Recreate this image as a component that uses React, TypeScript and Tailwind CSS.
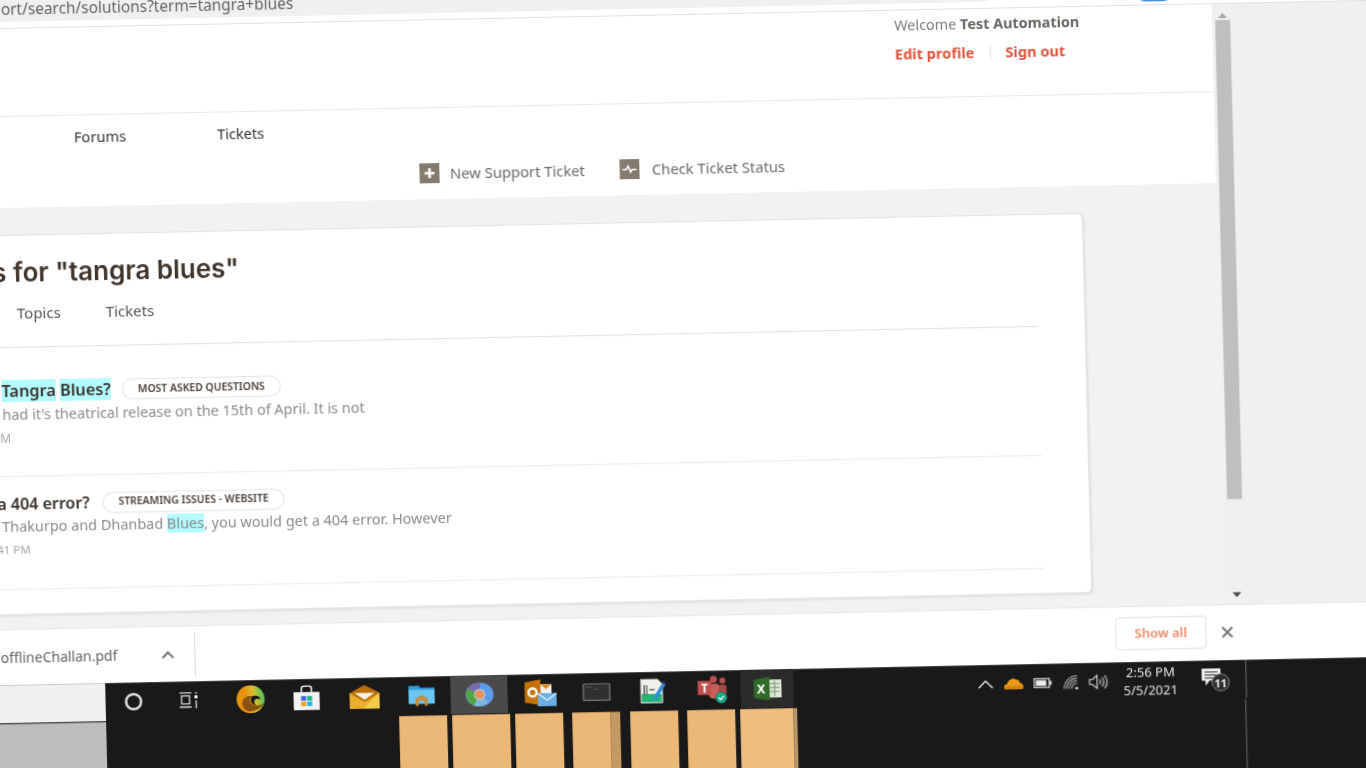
import type { ReactNode } from "react";

const sans = "font-['Noto_Sans',sans-serif]";

const Highlight = ({ children }: { children: ReactNode }) => (
  <mark className="bg-[#b3fbff] text-inherit">{children}</mark>
);

const Badge = ({ label, width }: { label: string; width: string }) => (
  <span className={`flex h-[21px] items-center justify-center rounded-full border-[1.5px] border-[#e7e5e1] text-[10.4px] font-semibold whitespace-nowrap text-[#4a433b] ${width}`}>
    {label}
  </span>
);

const CortanaIcon = () => (
  <svg width="20" height="20" viewBox="0 0 20 20">
    <circle cx="10" cy="10" r="7.5" fill="none" stroke="#e4e4e4" strokeWidth="2.4" />
  </svg>
);

const TaskViewIcon = () => (
  <svg width="22" height="20" viewBox="0 0 22 20" fill="none" stroke="#d8d8d8" strokeWidth="1.3">
    <path d="M1 2.5h12M1 16.5h12M3 5.5h8v8H3z" />
    <path d="M17.5 1.5v2M17.5 10v8" />
    <rect x="16" y="5" width="3" height="3" fill="#fff" stroke="none" />
  </svg>
);

const EdgeIcon = () => (
  <svg width="30" height="28" viewBox="0 0 30 28">
    <defs>
      <linearGradient id="edge" x1="0" y1="0.6" x2="1" y2="0.4">
        <stop offset="0.35" stopColor="#e8930f" />
        <stop offset="0.65" stopColor="#d9bd2c" />
        <stop offset="0.95" stopColor="#58c858" />
      </linearGradient>
    </defs>
    <circle cx="15" cy="14" r="14" fill="url(#edge)" />
    <path d="M9 24C3 17 9 9 17 11c-4 2-4 7 1 9 4 1 8 0 11-3-3 7-14 12-20 7z" fill="#8a5212" />
    <path d="M17 11c4-1 7 0 8 3-2-.5-5-.5-6 1-1 2 0 4 1 5-4 0-7-6-3-9z" fill="#191919" />
  </svg>
);

const StoreIcon = () => (
  <svg width="28" height="26" viewBox="0 0 28 26">
    <path d="M9 7V3.5C9 2 10 1 11.5 1h5C18 1 19 2 19 3.5V7" fill="none" stroke="#e8e8e8" strokeWidth="1.6" />
    <rect x="1" y="7" width="26" height="18" fill="#f2f2f2" />
    <rect x="8.5" y="11" width="5" height="4.5" fill="#3a62e0" />
    <rect x="14.5" y="11" width="5" height="4.5" fill="#10b582" />
    <rect x="8.5" y="16.5" width="5" height="4.5" fill="#f0a010" />
    <rect x="14.5" y="16.5" width="5" height="4.5" fill="#18b4f0" />
  </svg>
);

const MailIcon = () => (
  <svg width="30" height="24" viewBox="0 0 30 24">
    <path d="M0 8 15 0l15 8v16H0z" fill="#b86f08" />
    <path d="M5 8h20l-10 7z" fill="#f6f2ea" />
    <path d="M0 8l15 9 15-9v16H0z" fill="#e8b02c" />
    <path d="M30 8v16H13z" fill="#f4cc4a" />
  </svg>
);

const FolderIcon = () => (
  <svg width="28" height="22" viewBox="0 0 28 22">
    <path d="M1 1h10l2 2h14v16H1z" fill="#2f9bd8" />
    <rect x="1" y="5" width="26" height="14" fill="#6cc6f0" />
    <path d="M8 21v-8h3v-2h6v2h3v8h-3v-5h-6v5z" fill="#c98a3a" />
  </svg>
);

const ChromeIcon = () => (
  <svg width="28" height="24" viewBox="0 0 28 24">
    <ellipse cx="14" cy="12" rx="14" ry="12" fill="#5d9ce8" />
    <path d="M14 12 2 6C-1 12 1 19 8 23z" fill="#4fa53f" />
    <path d="M14 12 8 23c5 2 11 1 15-4z" fill="#7cb6d8" />
    <path d="M14 12 2 6C5 1 10 0 15 0z" fill="#7a6aa8" />
    <circle cx="14" cy="12" r="5.6" fill="#b8d4ee" />
    <circle cx="14" cy="12" r="4.6" fill="#e8925a" />
  </svg>
);

const OutlookIcon = () => (
  <svg width="32" height="28" viewBox="0 0 32 28">
    <path d="M0 3 16 0v26L0 23z" fill="#c57306" />
    <circle cx="8" cy="13" r="4" fill="none" stroke="#fff" strokeWidth="2.4" />
    <rect x="16" y="5" width="11" height="10" fill="#f2f2f2" />
    <path d="M16 5h11l-5.500 5z" fill="#d98a1e" />
    <rect x="13" y="14" width="19" height="13" fill="#6aaee6" />
    <path d="M13 14l9.500 7L32 14" fill="none" stroke="#e8f3fc" strokeWidth="1.300" />
  </svg>
);

const CmdIcon = () => (
  <svg width="28" height="18" viewBox="0 0 28 18">
    <rect x="0.700" y="0.700" width="26.600" height="16.600" rx="1" fill="#303030" stroke="#757575" strokeWidth="1.400" />
    <path d="M4 4h5M11 6h4" stroke="#5a5a5a" strokeWidth="1" />
  </svg>
);

const SnipIcon = () => (
  <svg width="27" height="26" viewBox="0 0 27 26">
    <path d="M1 1h17l5 5v19H1z" fill="#f1f1ec" stroke="#9a9a90" strokeWidth="0.800" />
    <path d="M2 16h20v8H2z" fill="#22b573" />
    <path d="M4 7h1.500v10H4zM7 7h1v10H7zM10 11h5v1.200h-5z" fill="#4a4a4a" />
    <path d="M14 19 23 5l3 2-9 14-3.500 1.500z" fill="#2f8fd8" />
    <path d="M23 5l1.200-2 2.800 2-1 2z" fill="#30307a" />
  </svg>
);

const TeamsIcon = () => (
  <svg width="30" height="28" viewBox="0 0 30 28">
    <circle cx="16" cy="3.500" r="3.500" fill="#b8524e" />
    <circle cx="25" cy="5" r="3" fill="#b8524e" />
    <rect x="11" y="8" width="12" height="15" rx="5" fill="#c8605a" />
    <rect x="21" y="9" width="8" height="11" rx="3" fill="#a84844" />
    <rect x="0" y="5" width="14" height="14" fill="#c0504c" />
    <text x="7" y="16.500" textAnchor="middle" fontSize="12" fontWeight="700" fill="#fff" fontFamily="Noto Sans, sans-serif">T</text>
    <circle cx="23.500" cy="22" r="5.800" fill="#19a987" stroke="#3a3a3a" strokeWidth="0.500" />
    <path d="M20.800 22l2 2 3.400-3.600" fill="none" stroke="#fff" strokeWidth="1.300" />
  </svg>
);

const ExcelIcon = () => (
  <svg width="28" height="24" viewBox="0 0 28 24">
    <rect x="14" y="3" width="14" height="18" fill="#dfe8d8" />
    <path d="M16 7h10M16 11h10M16 15h10M21 4v16" stroke="#5a8a50" strokeWidth="0.800" />
    <path d="M0 3 16 0v24L0 21z" fill="#2f6a2a" />
    <text x="7.500" y="16.500" textAnchor="middle" fontSize="12.500" fontWeight="700" fill="#fff" fontFamily="Noto Sans, sans-serif">X</text>
  </svg>
);

const OneDriveIcon = () => (
  <svg width="20" height="12" viewBox="0 0 20 12">
    <path d="M1 11.500C-.5 9 1 6.500 3.500 6.500 4.500 2.500 9-.5 12.500 2c2 0 3.500 1.500 4 3.500 2.500 0 4 3 2.500 6z" fill="#ec9c1a" />
    <path d="M1 11.500C0 9.500 2 8 5 8l4 .5 6-.5c2.500 0 5 1 4 3.500z" fill="#d98408" />
  </svg>
);

const BatteryIcon = () => (
  <svg width="18" height="10" viewBox="0 0 18 10">
    <rect x="0.600" y="0.600" width="15" height="8.800" fill="none" stroke="#e4e4e4" strokeWidth="1.200" />
    <rect x="2.200" y="2.200" width="10.500" height="5.600" fill="#eee" />
    <rect x="16.200" y="3" width="1.800" height="4" fill="#e4e4e4" />
  </svg>
);

const WifiIcon = () => (
  <svg width="16" height="14" viewBox="0 0 16 14" fill="none" stroke="#c8c8c8" strokeWidth="1">
    <path d="M.5 13.500A13 13 0 0 1 13.500.5M3 13.500A10.500 10.500 0 0 1 13.500 3M5.500 13.500A8 8 0 0 1 13.500 5.500M8 13.500A5.500 5.500 0 0 1 13.500 8" />
    <circle cx="13" cy="13" r="1.400" fill="#eee" stroke="none" />
  </svg>
);

const SpeakerIcon = () => (
  <svg width="20" height="16" viewBox="0 0 20 16" fill="none" stroke="#dedede" strokeWidth="1.100">
    <path d="M1 5.500h3L8.500 1.500v13L4 10.500H1z" />
    <path d="M11 5.500a3.500 3.500 0 0 1 0 5M13.500 3.500a6.500 6.500 0 0 1 0 9M16 1.500a9.500 9.500 0 0 1 0 13" />
  </svg>
);

const NotificationIcon = () => (
  <div className="relative h-[22px] w-[28px]">
    <svg width="20" height="18" viewBox="0 0 20 18">
      <path d="M0 0h19v12H8l-4 5v-5H0z" fill="#f4f4f4" />
      <path d="M3 3.500h13M3 6.500h13M3 9.500h9" stroke="#222" strokeWidth="1" />
    </svg>
    <span className="absolute top-[5px] left-[10px] flex h-[18px] w-[18px] items-center justify-center rounded-full border border-[#888] bg-[#2c2c2c] text-[11px] leading-none font-bold text-[#eee]">
      11
    </span>
  </div>
);

const PlusBox = () => (
  <svg width="20" height="20" viewBox="0 0 20 20">
    <rect width="20" height="20" fill="#857a6e" />
    <path d="M10 5v10M5 10h10" stroke="#fff" strokeWidth="2.600" />
  </svg>
);

const PulseBox = () => (
  <svg width="20" height="20" viewBox="0 0 20 20">
    <rect width="20" height="20" fill="#857a6e" />
    <path d="M3 10.500h3.500l2-3.500 2.500 6 1.500-2.500H17" fill="none" stroke="#fff" strokeWidth="1.500" />
  </svg>
);

const Taskbar = () => (
  <div className="flex flex-col bg-[#191919]">
    <div className="flex h-[38px] items-stretch">
      <div className="w-[188px] bg-[#f0f0f0]" />
      <div className="flex flex-1 items-center">
        <div className="flex h-full w-[55px] items-center justify-center"><CortanaIcon /></div>
        <div className="flex h-full w-[58px] items-center justify-center"><TaskViewIcon /></div>
        <div className="flex h-full w-[63px] items-center justify-center"><EdgeIcon /></div>
        <div className="flex h-full w-[50px] items-center justify-center"><StoreIcon /></div>
        <div className="flex h-full w-[66px] items-center justify-center"><MailIcon /></div>
        <div className="flex h-full w-[48px] items-center justify-center"><FolderIcon /></div>
        <div className="ml-[5px] flex h-full w-[57px] items-center justify-center bg-[#4a4a4a]"><ChromeIcon /></div>
        <div className="flex h-full w-[65px] items-center justify-center"><OutlookIcon /></div>
        <div className="flex h-full w-[48px] items-center justify-center"><CmdIcon /></div>
        <div className="flex h-full w-[64px] items-center justify-center"><SnipIcon /></div>
        <div className="flex h-full w-[56px] items-center justify-center"><TeamsIcon /></div>
        <div className="flex h-full w-[53px] items-center justify-center bg-[#2b2b2b]"><ExcelIcon /></div>
        <div className="ml-[182px] flex w-[20px] justify-center">
          <svg width="16" height="10" viewBox="0 0 16 10" fill="none" stroke="#e4e4e4" strokeWidth="1.400"><path d="M1 9l7-7 7 7" /></svg>
        </div>
        <div className="ml-[6px] flex w-[24px] justify-center"><OneDriveIcon /></div>
        <div className="ml-[7px] flex w-[20px] justify-center"><BatteryIcon /></div>
        <div className="ml-[10px] flex w-[18px] justify-center"><WifiIcon /></div>
        <div className="ml-[8px] flex w-[20px] justify-center"><SpeakerIcon /></div>
        <div className={`ml-[12px] w-[60px] text-center text-[13px] leading-[18px] whitespace-nowrap text-[#e4e4e4] ${sans}`}>
          <div>2:56 PM</div>
          <div>5/5/2021</div>
        </div>
        <div className="ml-[21px] flex w-[24px] justify-center"><NotificationIcon /></div>
        <div className="ml-[20px] h-full w-px bg-[#6a6a6a]" />
      </div>
    </div>
    <div className="mt-[1px] flex h-[110px]">
      <div className="w-[188px] bg-[#bdbdbd]" />
      <div className="flex flex-1 pl-[293px]">
        <div className="w-[48px] bg-[#ecb877]" />
        <div className="ml-[5px] w-[58px] bg-[#ecb877]" />
        <div className="ml-[5px] w-[48px] bg-[#ecb877]" />
        <div className="ml-[9px] w-[38px] bg-[#ecb877]" />
        <div className="w-[10px] bg-[#c39a63]" />
        <div className="ml-[10px] w-[48px] bg-[#ecb877]" />
        <div className="ml-[9px] w-[48px] bg-[#ecb877]" />
        <div className="ml-[5px] w-[53px] bg-[#eebd7f]" />
        <div className="w-[4px] bg-[#b8976a]" />
        <div className="ml-[448px] h-full w-px bg-[#6a6a6a]" />
      </div>
    </div>
  </div>
);

const ResultsCard = () => (
  <div className="h-[380px] w-[1177px] rounded-r-md border-t border-r border-b border-[#e4e1dc] bg-white shadow-[1px_1px_2px_rgba(0,0,0,0.06)]">
    <div className="mt-[16px] flex h-[40px] w-[332px] items-center justify-end font-['Inter',sans-serif] text-[26px] font-semibold whitespace-nowrap text-[#40352b]">
      s for "tangra blues"
    </div>
    <div className="flex h-[55.5px] w-[1130px] gap-[45px] border-b border-[#dfdedb] pt-[9px] pl-[109px] text-[15px] leading-[24px] text-[#5a5550]">
      <span>Topics</span>
      <span>Tickets</span>
    </div>
    <div className="h-[129.5px] w-[1130px] border-b border-[#ecebe8] pt-[33px]">
      <div className="flex h-[22px] items-center gap-[11px]">
        <div className="w-[201px] text-right text-[16.3px] font-semibold whitespace-nowrap text-[#3b332b]">
          <Highlight>Tangra</Highlight> <Highlight>Blues?</Highlight>
        </div>
        <Badge label="MOST ASKED QUESTIONS" width="w-[159px]" />
      </div>
      <p className="mt-[2.5px] h-[20px] pl-[92px] text-[14.45px] leading-[20px] whitespace-nowrap text-[#8b8b8b]">
        had it's theatrical release on the 15th of April. It is not
      </p>
      <div className="mt-[5.5px] h-[16px] w-[100px] text-right text-[12px] leading-[16px] text-[#a8a8a8]">M</div>
    </div>
    <div className="h-[112.5px] w-[1130px] border-b border-[#ecebe8] pt-[16px]">
      <div className="flex h-[22px] items-center gap-[13px]">
        <div className="w-[177px] text-right text-[16px] font-semibold whitespace-nowrap text-[#3b332b]">a 404 error?</div>
        <Badge label="STREAMING ISSUES - WEBSITE" width="w-[182px]" />
      </div>
      <p className="mt-[2px] h-[20px] pl-[89px] text-[14.45px] leading-[20px] whitespace-nowrap text-[#8b8b8b]">
        Thakurpo and Dhanbad <Highlight>Blues</Highlight>, you would get a 404 error. However
      </p>
      <div className="mt-[5px] h-[16px] w-[117px] text-right text-[11.5px] leading-[16px] text-[#a8a8a8]">41 PM</div>
    </div>
  </div>
);

const App = () => {
  return (
    <div className={`h-[768px] w-[1366px] overflow-hidden bg-[#f0f0f0] ${sans}`}>
      <div className="mt-[-10px] ml-[-100px] flex h-[860px] w-[1620px] origin-[100px_10px] flex-col blur-[0.3px] [transform:matrix(1,-0.0205,0.025,1,0,0)]">
        {/* browser toolbar */}
        <div className="relative h-[39px] border-b border-[#e3dfda] bg-white">
          <div className="h-[32px] w-[1097px] rounded-br-[16px] bg-[#f1f0ee] pt-[10px]">
            <div className="w-[393px] text-right text-[15.4px] leading-[20px] whitespace-nowrap text-[#5f6368]">
              ort/search/solutions?term=tangra+blues
            </div>
          </div>
          <div className="absolute top-[19px] left-[1237px] h-[16px] w-[34px] rounded-full bg-[#4a90e2]" />
        </div>

        <div className="flex h-[600px]">
          <div className="flex w-[1311px] flex-col">
            {/* site header */}
            <div className="h-[88px] border-b border-[#ebe9e6] bg-white pt-[5px] pl-[993px]">
              <div className="h-[20px] text-[14.4px] leading-[20px] whitespace-nowrap text-[#7d7d7d]">
                Welcome <span className="font-bold text-[#6b6560]">Test Automation</span>
              </div>
              <div className="mt-[8.5px] flex h-[20px] items-center text-[14.6px] font-bold text-[#e0533b]">
                <span>Edit profile</span>
                <span className="mx-[15px] h-[15px] w-px bg-[#dcdcdc]" />
                <span>Sign out</span>
              </div>
            </div>

            {/* nav */}
            <div className="h-[91px] bg-white pt-[9.5px]">
              <div className="flex h-[22px] gap-[91px] pl-[170.5px] text-[14.6px] leading-[22px] text-[#333]">
                <span>Forums</span>
                <span>Tickets</span>
              </div>
              <div className="mt-[23.5px] flex h-[20px] items-center pl-[514.5px] text-[14.75px] text-[#6a6a6a]">
                <PlusBox />
                <span className="ml-[11px]">New Support Ticket</span>
                <span className="ml-[35px]"><PulseBox /></span>
                <span className="ml-[12px]">Check Ticket Status</span>
              </div>
            </div>

            <div className="flex-1 bg-[#f3f2f0] pt-[27px]">
              <ResultsCard />
            </div>
          </div>

          {/* scrollbar gutter */}
          <div className="flex flex-1 flex-col bg-[#f0f0f0] pt-[6px] pl-[3px]">
            <div className="flex h-[10px] w-[15px] items-center justify-center">
              <svg width="9" height="5" viewBox="0 0 9 5"><path d="M4.500 0 9 5H0z" fill="#a8a8a8" /></svg>
            </div>
            <div className="h-[479px] w-[15px] bg-[#bfbfbf]" />
            <div className="mt-[90px] flex h-[10px] w-[15px] items-center justify-center">
              <svg width="9" height="5" viewBox="0 0 9 5"><path d="M0 0h9L4.500 5z" fill="#444" /></svg>
            </div>
          </div>
        </div>

        {/* download bar */}
        <div className="flex h-[56px] items-center border-t border-[#e2dfda] bg-white">
          <div className="flex h-[44px] w-[279px] items-center border-r border-[#dcdcdc]">
            <span className="w-[201px] text-right text-[14px] whitespace-nowrap text-[#5f6368]">offlineChallan.pdf</span>
            <svg className="ml-[44px]" width="13" height="8" viewBox="0 0 13 8" fill="none" stroke="#777" strokeWidth="2"><path d="M1 7l5.500-5.500L12 7" /></svg>
          </div>
          <div className="mt-[-2px] ml-[920px] flex h-[33px] w-[91px] items-center justify-center rounded-[4px] border border-[#e2dfdc] text-[13px] font-semibold text-[#ee8a68]">
            Show all
          </div>
          <svg className="mt-[-2px] ml-[15px]" width="12" height="12" viewBox="0 0 12 12" fill="none" stroke="#777" strokeWidth="2"><path d="M1 1l10 10M11 1 1 11" /></svg>
        </div>

        <Taskbar />
      </div>
    </div>
  );
};

export default App;
